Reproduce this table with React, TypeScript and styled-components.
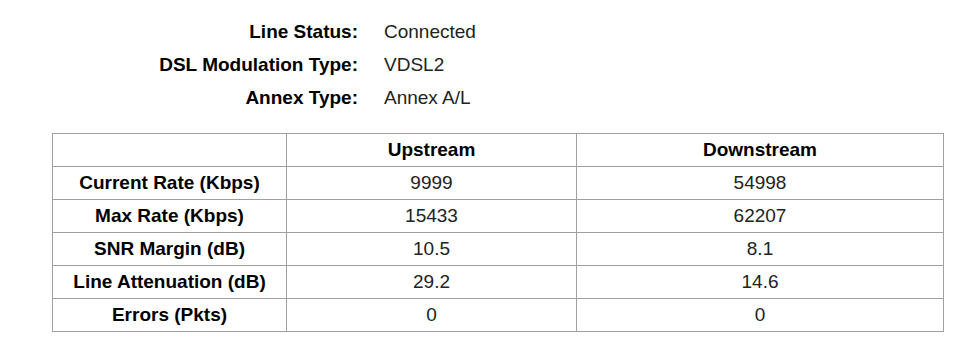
import React from "react";
import styled, { createGlobalStyle } from "styled-components";

const Global = createGlobalStyle`
  html, body { margin: 0; padding: 0; background: #fff; }
  body {
    margin: 8px;
    font-family: "Liberation Sans", Arial, sans-serif;
    font-size: 19px;
    color: #000;
  }
`;

const Page = styled.div`
  display: flex;
  flex-direction: column;
  padding-top: 7px;
`;

const InfoGrid = styled.div`
  display: grid;
  grid-template-columns: 350px auto;
  column-gap: 26px;
  grid-auto-rows: 33px;
  align-items: center;
`;

const InfoLabel = styled.div`
  font-weight: bold;
  text-align: right;
  color: #000;
`;

const InfoValue = styled.div`
  color: #222;
`;

const Table = styled.table`
  margin-top: 19px;
  margin-left: 44px;
  width: 891px;
  border-collapse: collapse;
  table-layout: fixed;
`;

const Cell = styled.td<{ $head?: boolean }>`
  border: 1px solid #a0a0a0;
  height: 32px;
  padding: 0;
  text-align: center;
  vertical-align: middle;
  font-weight: ${(p) => (p.$head ? "bold" : "normal")};
  color: ${(p) => (p.$head ? "#000" : "#222")};
`;

const info: [string, string][] = [
  ["Line Status:", "Connected"],
  ["DSL Modulation Type:", "VDSL2"],
  ["Annex Type:", "Annex A/L"],
];

const rows: [string, string, string][] = [
  ["Current Rate (Kbps)", "9999", "54998"],
  ["Max Rate (Kbps)", "15433", "62207"],
  ["SNR Margin (dB)", "10.5", "8.1"],
  ["Line Attenuation (dB)", "29.2", "14.6"],
  ["Errors (Pkts)", "0", "0"],
];

export default function App() {
  return (
    <>
      <Global />
      <Page>
        <InfoGrid>
          {info.map(([k, v]) => (
            <React.Fragment key={k}>
              <InfoLabel>{k}</InfoLabel>
              <InfoValue>{v}</InfoValue>
            </React.Fragment>
          ))}
        </InfoGrid>
        <Table>
          <colgroup>
            <col style={{ width: 234 }} />
            <col style={{ width: 290 }} />
            <col style={{ width: 367 }} />
          </colgroup>
          <tbody>
            <tr>
              <Cell $head />
              <Cell $head>Upstream</Cell>
              <Cell $head>Downstream</Cell>
            </tr>
            {rows.map(([k, u, d]) => (
              <tr key={k}>
                <Cell $head>{k}</Cell>
                <Cell>{u}</Cell>
                <Cell>{d}</Cell>
              </tr>
            ))}
          </tbody>
        </Table>
      </Page>
    </>
  );
}
